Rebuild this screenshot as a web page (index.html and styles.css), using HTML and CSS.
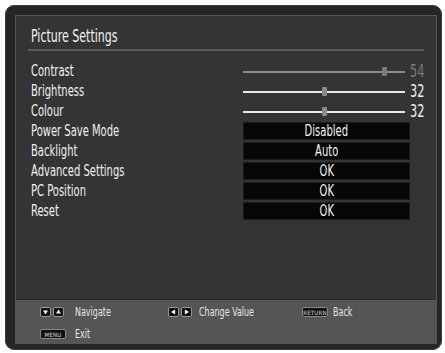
FILE: index.html
```html
<!DOCTYPE html>
<html lang="en">
<head>
    <meta charset="UTF-8">
    <meta name="viewport" content="width=device-width, initial-scale=1.0">
    <title>Picture Settings</title>
    <link rel="stylesheet" href="styles.css">
</head>
<body>
    <div class="tv">
        <div class="panel">
            <div class="content">
                <h1 class="title"><span class="txt">Picture Settings</span></h1>

                <!-- Settings list -->
                <div class="rows">
                    <div class="row slider-row dim">
                        <span class="label txt">Contrast</span>
                        <div class="slider"><div class="track"></div><div class="thumb" style="left: 87%"></div></div>
                        <span class="num"><span class="txt">54</span></span>
                    </div>
                    <div class="row slider-row">
                        <span class="label txt">Brightness</span>
                        <div class="slider"><div class="track"></div><div class="thumb" style="left: 50%"></div></div>
                        <span class="num"><span class="txt">32</span></span>
                    </div>
                    <div class="row slider-row">
                        <span class="label txt">Colour</span>
                        <div class="slider"><div class="track"></div><div class="thumb" style="left: 50%"></div></div>
                        <span class="num"><span class="txt">32</span></span>
                    </div>
                    <div class="row box-row">
                        <span class="label txt">Power Save Mode</span>
                        <div class="box"><span class="txt">Disabled</span></div>
                    </div>
                    <div class="row box-row">
                        <span class="label txt">Backlight</span>
                        <div class="box"><span class="txt">Auto</span></div>
                    </div>
                    <div class="row box-row">
                        <span class="label txt">Advanced Settings</span>
                        <div class="box"><span class="txt">OK</span></div>
                    </div>
                    <div class="row box-row">
                        <span class="label txt">PC Position</span>
                        <div class="box"><span class="txt">OK</span></div>
                    </div>
                    <div class="row box-row">
                        <span class="label txt">Reset</span>
                        <div class="box"><span class="txt">OK</span></div>
                    </div>
                </div>
            </div>

            <!-- Key help -->
            <div class="footer">
                <div class="hint nav">
                    <span class="keys">
                        <span class="key"><svg viewBox="0 0 10 10"><path d="M2 3h6L5 8z"/></svg></span>
                        <span class="key"><svg viewBox="0 0 10 10"><path d="M2 7h6L5 2z"/></svg></span>
                    </span>
                    <span class="txt">Navigate</span>
                </div>
                <div class="hint change">
                    <span class="keys">
                        <span class="key"><svg viewBox="0 0 10 10"><path d="M7 2v6L2 5z"/></svg></span>
                        <span class="key"><svg viewBox="0 0 10 10"><path d="M3 2v6l5-3z"/></svg></span>
                    </span>
                    <span class="txt">Change Value</span>
                </div>
                <div class="hint back">
                    <span class="btn">RETURN</span>
                    <span class="txt">Back</span>
                </div>
                <div class="hint exit">
                    <span class="btn">MENU</span>
                    <span class="txt">Exit</span>
                </div>
            </div>
        </div>
    </div>
</body>
</html>
```

FILE: styles.css
```css
body {
    margin: 0;
    background-color: #fff;
    font-family: "DejaVu Sans Condensed", "DejaVu Sans", sans-serif;
    font-stretch: condensed;
}
/* the set's font is a tall, narrow face: squeeze DejaVu Condensed to match */
.txt {
    display: inline-block;
    transform: scaleX(0.74);
    transform-origin: left center;
    white-space: nowrap;
}
.tv {
    box-sizing: border-box;
    width: 437px;
    height: 345px;
    margin: 5px 0 0 5px;
    padding: 9px 4px 7px 9px;
    background-color: #262626;
    border: 1px solid #3c3c3c;
    border-radius: 9px;
}
.panel {
    display: flex;
    flex-direction: column;
    height: 100%;
    background-color: #343434;
    border: 1px solid #555;
}
.content { flex: 1; }
.title {
    margin: 0 12px;
    padding: 10px 3px 2px;
    font-size: 17px;
    line-height: 21px;
    font-weight: normal;
    color: #f2f2f2;
    border-bottom: 2px solid #5a5a5a;
}
.title .txt { transform: scaleX(0.72); }
.rows {
    margin-top: 10px;
    padding: 0 14px 0 15px;
}
.row {
    display: grid;
    align-items: center;
    height: 20px;
    font-size: 15px;
    color: #f0f0f0;
}
.slider-row { grid-template-columns: 1fr 162px 17px; }
.box-row { grid-template-columns: 1fr 167px 12px; }
.slider {
    position: relative;
    height: 9px;
}
.track {
    margin-top: 4px;
    height: 2px;
    background-color: #e8e8e8;
}
.thumb {
    position: absolute;
    top: 0;
    width: 5px;
    height: 9px;
    margin-left: -2px;
    background-color: #8a8a8a;
    border-radius: 1px;
}
.num {
    text-align: right;
    font-size: 17px;
}
.num .txt { transform-origin: right center; }
.dim .track { background-color: #8c8c8c; }
.dim .thumb { background-color: #7a7a7a; }
.dim .num { color: #7c7c7c; }
.box {
    box-sizing: border-box;
    height: 18px;
    line-height: 17px;
    background-color: #060606;
    border: 1px solid #1c1c1c;
    text-align: center;
    font-size: 15px;
    color: #f4f4f4;
}
.box .txt { transform-origin: center; }
.footer {
    display: grid;
    grid-template-columns: 128px 134px auto;
    row-gap: 5px;
    height: 44px;
    box-sizing: border-box;
    padding: 5px 0 0 24px;
    background-color: #555;
    border-top: 1px solid #2a2a2a;
    font-size: 12px;
    color: #e6e6e6;
}
.hint {
    display: flex;
    align-items: center;
    height: 14px;
}
.nav { gap: 11px; }
.change { gap: 7px; }
.back { gap: 5px; }
.exit { gap: 9px; }
.keys {
    display: flex;
    gap: 2px;
}
.key {
    display: flex;
    width: 11px;
    height: 10px;
    background-color: #111;
    border: 1px solid #999;
    border-radius: 2px;
    box-sizing: border-box;
}
.key svg {
    width: 100%;
    height: 100%;
    fill: #fff;
}
.btn {
    box-sizing: border-box;
    width: 26px;
    height: 10px;
    line-height: 9px;
    background-color: #111;
    border: 1px solid #888;
    border-radius: 2px;
    font-size: 6px;
    text-align: center;
    color: #ddd;
    letter-spacing: 0.2px;
}
```
